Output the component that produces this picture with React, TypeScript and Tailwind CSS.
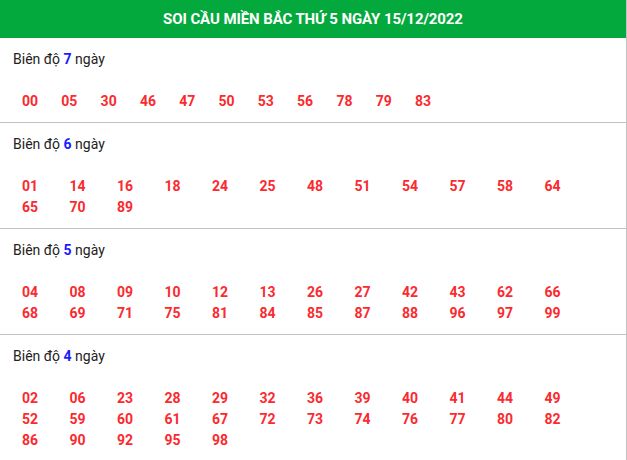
const sections = [
  { days: 7, cols: 'grid-cols-[repeat(11,39.3px)]', nums: ['00', '05', '30', '46', '47', '50', '53', '56', '78', '79', '83'] },
  {
    days: 6,
    cols: 'grid-cols-[repeat(12,47.5px)]',
    nums: ['01', '14', '16', '18', '24', '25', '48', '51', '54', '57', '58', '64', '65', '70', '89'],
  },
  {
    days: 5,
    cols: 'grid-cols-[repeat(12,47.5px)]',
    nums: ['04', '08', '09', '10', '12', '13', '26', '27', '42', '43', '62', '66', '68', '69', '71', '75', '81', '84', '85', '87', '88', '96', '97', '99'],
  },
  {
    days: 4,
    cols: 'grid-cols-[repeat(12,47.5px)]',
    nums: [
      '02', '06', '23', '28', '29', '32', '36', '39', '40', '41', '44', '49',
      '52', '59', '60', '61', '67', '72', '73', '74', '76', '77', '80', '82',
      '86', '90', '92', '95', '98',
    ],
  },
]

const App = () => {
  return (
    <div className="w-[627px] h-[460px] bg-white font-['Roboto',sans-serif] overflow-hidden">
      <div className="border-r border-[#c2c2c2] h-full">
        {/* header */}
        <div className="h-[38px] bg-[#03a93c] flex items-center justify-center">
          <h1 className="text-white font-bold text-[15px] tracking-[-0.1px]">SOI CẦU MIỀN BẮC THỨ 5 NGÀY 15/12/2022</h1>
        </div>

        {sections.map((s) => (
          <div key={s.days} className="border-b border-[#c2c2c2] pt-[11px] pb-[10px]">
            <div className="pl-[13px] h-5 leading-5 text-[14px] text-[#222]">
              Biên độ <span className="font-bold text-[#1a1aff]">{s.days}</span> ngày
            </div>
            <div className={`mt-[22px] pl-[22px] grid ${s.cols}`}>
              {s.nums.map((n, i) => (
                <span key={i} className="h-[21px] leading-[21px] text-[14px] font-bold text-[#fa2a2f]">
                  {n}
                </span>
              ))}
            </div>
          </div>
        ))}
      </div>
    </div>
  )
}

export default App
